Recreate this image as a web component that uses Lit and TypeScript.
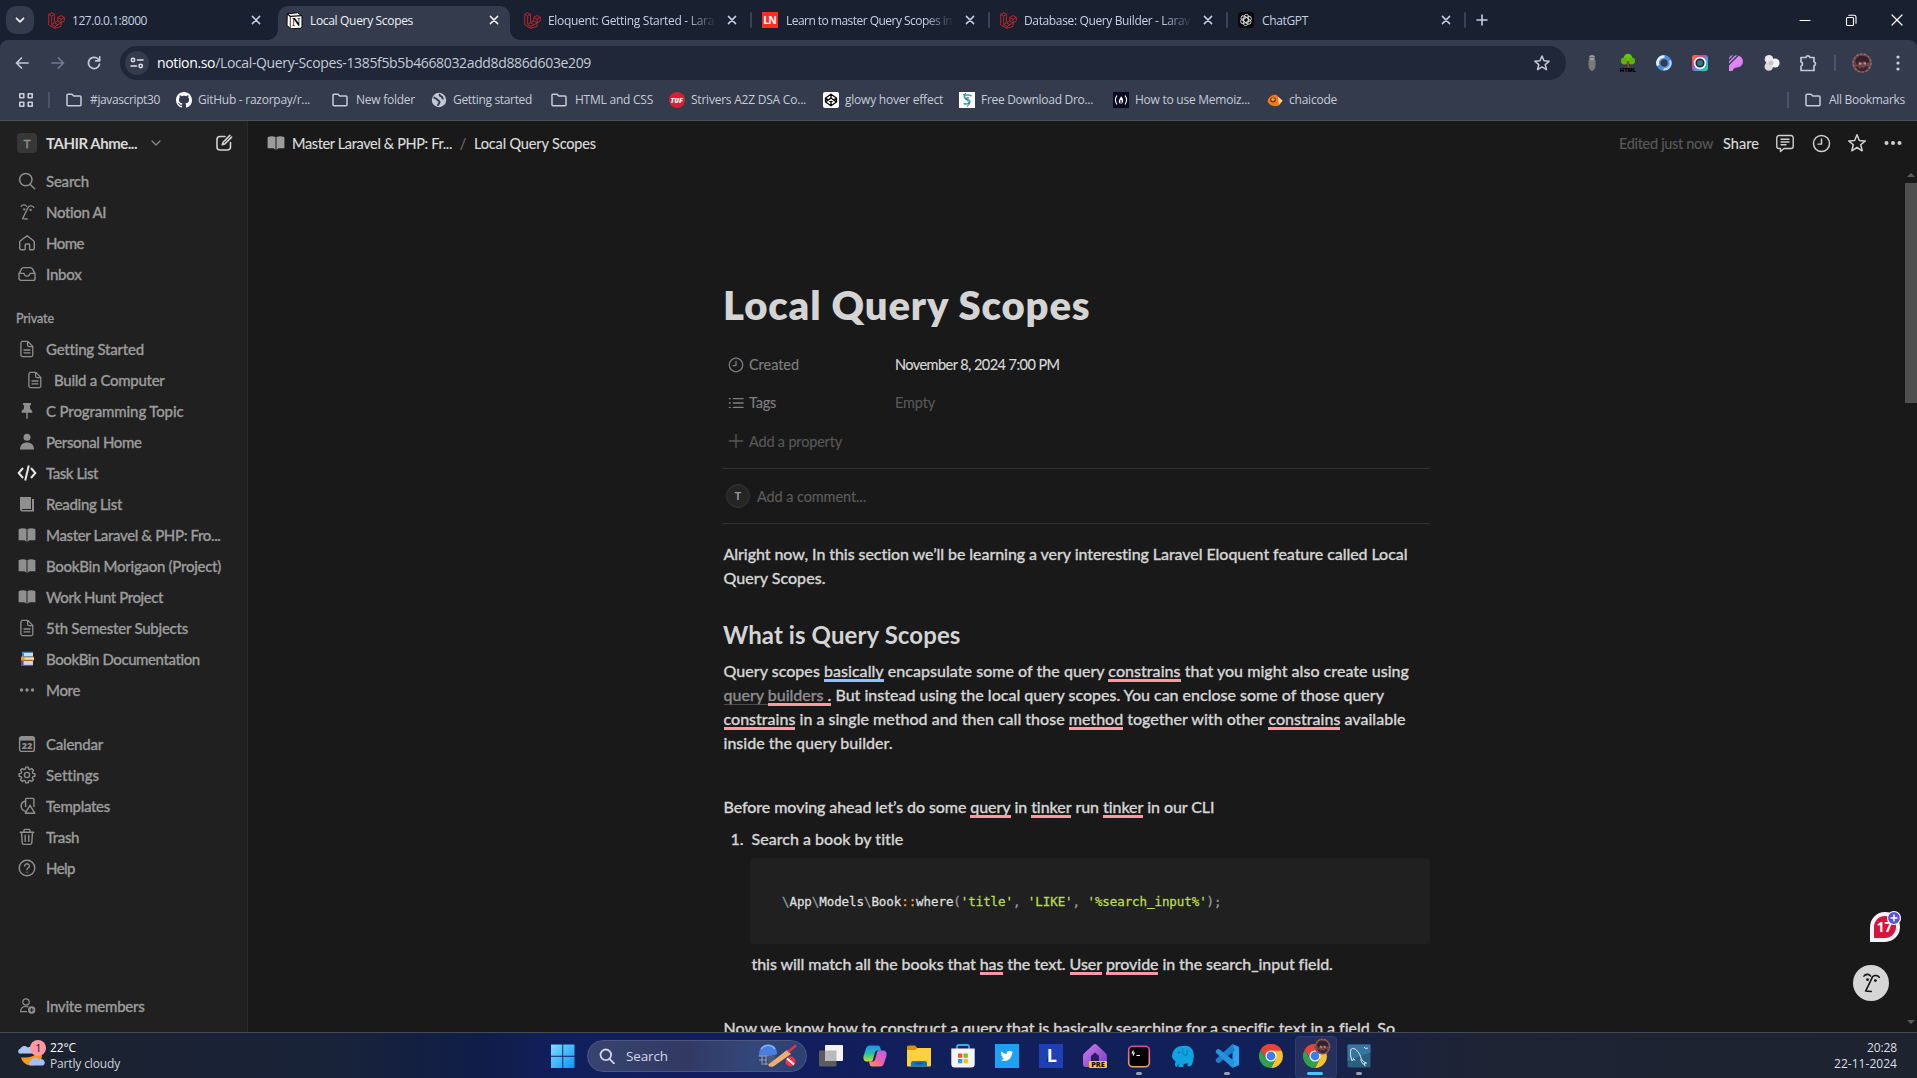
import { LitElement, html, css, svg, nothing } from "lit";
import { customElement, property } from "lit/decorators.js";

/** One line of text, tracked so that it fills the given measure. */
@customElement("fit-text")
class FitText extends LitElement {
  static styles = css`
    :host { display: inline-block; white-space: nowrap; flex: none; }
  `;
  @property({ type: Number }) measure = 0;
  firstUpdated() {
    const n = (this.textContent ?? "").length;
    const natural = this.getBoundingClientRect().width;
    if (n && this.measure && natural) {
      this.style.letterSpacing = `${(this.measure - natural) / n}px`;
    }
  }
  render() {
    return html`<slot></slot>`;
  }
}

const fit = (w: number, content: unknown, cls = "") =>
  html`<fit-text class=${cls} .measure=${w}>${content}</fit-text>`;

const icon = (size: number, box: number, body: unknown, cls = "") =>
  html`<svg class="ic ${cls}" width=${size} height=${size} viewBox="0 0 ${box} ${box}">${body}</svg>`;

const line = (size: number, box: number, d: string, sw: number, extra: unknown = nothing) =>
  icon(size, box, svg`<g fill="none" stroke="currentColor" stroke-width=${sw} stroke-linecap="round" stroke-linejoin="round"><path d=${d}></path>${extra}</g>`);

/* ---------- browser icons ---------- */
const laravel = icon(17, 24, svg`<g fill="none" stroke="#c6252b" stroke-width="1.3" stroke-linejoin="round">
  <path d="M1 3.2 5 1l4.2 2.2v12l4.6-2.5V7.6l4.6-2.6 4.6 2.6v5.2l-4.6 2.6v5L9.8 23 1 18.2z"></path>
  <path d="M1 3.2 5.2 5.6 9.2 3.2M5.2 5.6v12.2l4.6 2.6 8.6-5M9.8 20.4V23M9.2 15.2l4.6 2.7M5.2 17.8l4-2.6M13.8 7.6l4.6 2.6 4.6-2.6M18.4 10.2v5.2M13.8 12.7l4.6 2.7"></path></g>`);
const notion = icon(17, 17, svg`<path d="M1.2 1.8 11.6.8l4.4 3V15l-1 1.2-10.6.6L1 13.2z" fill="#fff" stroke="#050505" stroke-width="1"></path>
  <path d="M1.4 2 4.4 4.4l11.3-.7" fill="none" stroke="#050505" stroke-width="1.2"></path><path d="M4.3 4.4v12" stroke="#050505" stroke-width=".8"></path>
  <text x="10.2" y="14.2" text-anchor="middle" font-family="Liberation Serif,serif" font-weight="700" font-size="11.5" fill="#000">N</text>`);
const ln = icon(16, 16, svg`<rect width="16" height="16" fill="#ff2d20"></rect><text x="7.600" y="12" text-anchor="middle" font-family="Open Sans,sans-serif" font-weight="700" font-size="10.5" letter-spacing="-1" fill="#fff">LN</text>`);
const gpt = icon(16, 16, svg`<rect width="16" height="16" rx="3" fill="#0b0b0b"></rect><g fill="none" stroke="#d8d8d8" stroke-width=".9">
  ${[0, 60, 120, 180, 240, 300].map((a) => svg`<path transform="rotate(${a} 8 8)" d="M8 5.2 10.6 6.7V4.6a2.3 2.3 0 0 0-4.5-.6v3.8"></path>`)}</g>`);
const closeX = line(10, 10, "M1.4 1.4l7.2 7.2M8.6 1.4l-7.2 7.2", 1.5);
const folder = line(16, 16, "M1 3.2a1 1 0 0 1 1-1h4l1.8 1.9H14a1 1 0 0 1 1 1v7.7a1 1 0 0 1-1 1H2a1 1 0 0 1-1-1z", 1.5);
const github = icon(16, 16, svg`<path fill="#fff" d="M8 0C3.58 0 0 3.58 0 8c0 3.54 2.29 6.53 5.47 7.59.4.07.55-.17.55-.38 0-.19-.01-.82-.01-1.49-2.01.37-2.53-.49-2.69-.94-.09-.23-.48-.94-.82-1.13-.28-.15-.68-.52-.01-.53.63-.01 1.08.58 1.23.82.72 1.21 1.87.87 2.33.66.07-.52.28-.87.51-1.07-1.78-.2-3.64-.89-3.64-3.95 0-.87.31-1.59.82-2.15-.08-.2-.36-1.02.08-2.12 0 0 .67-.21 2.2.82.64-.18 1.32-.27 2-.27s1.36.09 2 .27c1.53-1.04 2.2-.82 2.2-.82.44 1.1.16 1.92.08 2.12.51.56.82 1.27.82 2.15 0 3.07-1.87 3.75-3.65 3.95.29.25.54.73.54 1.48 0 1.07-.01 1.93-.01 2.2 0 .21.15.46.55.38A8.01 8.01 0 0016 8c0-4.42-3.58-8-8-8z"></path>`);
const globe = icon(16, 16, svg`<circle cx="8" cy="8" r="7.2" fill="#c3c8d2"></circle><path d="M2.500 5.500c2 .4 2.500.5 3.500 2s3 .8 2.500 2.800-1.500 1.500-1.500 3.500M9 2C8 3.500 9.500 4 10.500 4.500s.5 2 2 2.400" fill="none" stroke="#333b4c" stroke-width="2"></path>`);
const tuf = icon(16, 16, svg`<circle cx="8" cy="8" r="8" fill="#d51f33"></circle><text x="7.700" y="10.500" text-anchor="middle" font-family="Open Sans,sans-serif" font-style="italic" font-weight="800" font-size="6.800" fill="#fff">TUF</text>`);
const codepen = icon(16, 16, svg`<rect width="16" height="16" rx="2" fill="#fff"></rect><path d="M8 2.300 13.500 6v4L8 13.700 2.500 10V6zM8 2.300V6M8 10v3.700M2.500 6 8 10l5.500-4M2.500 10 8 6l5.500 4" fill="none" stroke="#000" stroke-width="1.300"></path>`);
const freeDl = icon(16, 16, svg`<rect width="16" height="16" fill="#fff"></rect><path d="M12.500 4C9 2 4 3 5.500 5.500s5.500 1.500 5.500 4-4 3-6.500 2" fill="none" stroke="#2aa6b8" stroke-width="1.500"></path><path d="M10 6C7 5 6 7 8 8.500S12 12 8 14.500M4 3l3-1.500" fill="none" stroke="#35506b" stroke-width="1"></path>`);
const fcc = icon(16, 16, svg`<rect width="16" height="16" fill="#0a0a23"></rect><path d="M4 3.500Q.8 8 4 12.500M12 3.500Q15.200 8 12 12.500" fill="none" stroke="#fff" stroke-width="1.100"></path><path d="M8 4.200C9.500 6 10.500 7.500 10 9.500S8.600 12 8 12s-2-.5-2.200-2.500S7.500 6.500 8 4.200z" fill="#fff"></path><path d="M8 8v4" stroke="#0a0a23" stroke-width="1.200"></path>`);
const chai = icon(16, 16, svg`<path d="M.5 9c1-4 5-7 9-6l6 5.500L12 13.500c-5 2-10 0-11.500-4.500z" fill="#f07a1c"></path><ellipse cx="6" cy="8" rx="3" ry="2.400" fill="#8a2a08"></ellipse><ellipse cx="6" cy="7.500" rx="1.700" ry="1.200" fill="#ffb347"></ellipse><path d="M11 4.800l4.500 3.900-3.500 4z" fill="#ffd9a0"></path>`);

/* ---------- sidebar icons ---------- */
const doc = line(18, 18, "M4 1.400h5.800l5 5v8.700a1.500 1.500 0 0 1-1.500 1.500H4.400a1.500 1.500 0 0 1-1.500-1.500V2.900A1.500 1.500 0 0 1 4.400 1.400M9.600 1.600v3.500a1.500 1.500 0 0 0 1.500 1.500h3.500M6 10h6M6 12.800h6", 1.300);
const book = icon(18, 18, svg`<path fill="currentColor" d="M.6 3.300C3 1.900 6.500 2 8.500 3v13c-1-1.200-1.600-1.700-3-1.700H.6zM17.400 3.300C15 1.900 11.500 2 9.500 3v13c1-1.200 1.600-1.700 3-1.700h4.900z"></path>`);
const facePaths = svg`<path d="M3.200 3.400c1.200-1.800 4-2 5.400-.2M9.600 5.400c.4-2.800 4.600-3.600 6.200-1M9.600 5.400 4.600 15.600l4.600.4" fill="none" stroke="currentColor" stroke-width="1.300" stroke-linecap="round" stroke-linejoin="round"></path><circle cx="6.200" cy="6.300" r="1.150" fill="currentColor"></circle><circle cx="12.600" cy="7" r="1.150" fill="currentColor"></circle>`;
const gearPath = (() => {
  let d = "";
  for (let i = 0; i < 8; i++) {
    const at = (r: number, o: number) => {
      const a = ((i * 45 + o) * Math.PI) / 180;
      return `${(9 + r * Math.cos(a)).toFixed(2)} ${(9 + r * Math.sin(a)).toFixed(2)}`;
    };
    d += `${i ? "L" : "M"}${at(6.2, -15)}L${at(8, -9)}L${at(8, 9)}L${at(6.2, 15)}`;
  }
  return d + "z";
})();
const clockD = "M9 4.800V9.600H5.800";
const I: Record<string, unknown> = {
  search: line(18, 18, "M12 12.200 16.600 16.800", 1.500, svg`<circle cx="7.800" cy="7.600" r="6.200"></circle>`),
  ai: icon(18, 18, facePaths),
  home: line(18, 18, "M2.500 6.800 9 1.700l6.500 5.100c.5.400.8.900.8 1.500v6a1.500 1.500 0 0 1-1.500 1.500h-2.600a.6.600 0 0 1-.6-.6V11a1 1 0 0 0-1-1H8.200a1 1 0 0 0-1 1v4.200a.6.600 0 0 1-.6.600H3.200a1.500 1.500 0 0 1-1.500-1.500v-6c0-.6.300-1.100.8-1.500z", 1.400),
  inbox: line(18, 18, "M1 8.600 3.700 3.700A2 2 0 0 1 5.400 2.600h7.200a2 2 0 0 1 1.700 1.100L17 8.600v4.800a2 2 0 0 1-2 2H3a2 2 0 0 1-2-2zM1 8.400h4.400c.4 0 .7.300.8.700a2.900 2.900 0 0 0 5.600 0c.1-.4.400-.7.800-.7H17", 1.400),
  doc,
  pin: icon(18, 18, svg`<path fill="currentColor" d="M5 1h8v1.800l-1.200.9.500 3.600c1.400.7 2.200 1.800 2.200 3.400H9.700V16l-.7 1.600-.7-1.600v-5.300H3.500c0-1.600.8-2.700 2.200-3.400l.5-3.600L5 2.800z"></path>`),
  person: icon(18, 18, svg`<circle cx="9" cy="4.300" r="3.500" fill="currentColor"></circle><path d="M2 16.500c0-4.500 2.800-7 7-7s7 2.500 7 7z" fill="currentColor"></path>`),
  code: icon(20, 20, svg`<g fill="none" stroke="#e6e6e6" stroke-width="2"><path d="M6 5 1.700 10 6 15M14 5l4.300 5-4.300 5M11.800 2.400 8.200 17.600"></path></g>`),
  reading: icon(18, 18, svg`<path fill="currentColor" d="M2 2h11v12H4.200c-.6 0-.6 1 0 1H14V4h2v12.500H4.500A2.500 2.500 0 0 1 2 14z"></path>`),
  book,
  books: icon(18, 18, svg`<rect x="4" y="2.500" width="11" height="4" fill="#c9ddea"></rect><rect x="4" y="2.500" width="2" height="4" fill="#2f8fd6"></rect><path d="M4 2.300h11M4 6.500h11" stroke="#3b94d9" stroke-width="1"></path><rect x="3" y="7" width="13" height="3.200" fill="#ffe0a3"></rect><path d="M3 7.200h13M3 10h13" stroke="#f2961d" stroke-width="1"></path><rect x="3" y="7" width="3.500" height="3.200" fill="#f2961d"></rect><rect x="3" y="11" width="12" height="4" fill="#cfd6e6"></rect><rect x="3" y="11" width="2.500" height="4.500" fill="#6b3fa0"></rect><path d="M3 15.400h12" stroke="#6b5a9a" stroke-width="1"></path>`),
  more: icon(18, 18, svg`<g fill="currentColor"><circle cx="3.500" cy="9" r="1.700"></circle><circle cx="9" cy="9" r="1.700"></circle><circle cx="14.500" cy="9" r="1.700"></circle></g>`),
  calendar: icon(18, 18, svg`<rect x="1.600" y="1.600" width="14.800" height="14.800" rx="2.200" fill="none" stroke="currentColor" stroke-width="1.400"></rect><path d="M1.600 2h14.800v3.600H1.600z" fill="currentColor"></path><text x="9" y="14.100" text-anchor="middle" font-family="Open Sans,sans-serif" font-weight="800" font-size="9" fill="currentColor">22</text>`),
  settings: line(18, 18, gearPath, 1.400, svg`<circle cx="9" cy="9" r="2.600"></circle>`),
  templates: line(18, 18, "M7 4.300a5 5 0 0 0 .3 9.800M7.600 9.600V2.200a.8.800 0 0 1 .8-.8h6.700a.8.800 0 0 1 .8.800v7.300M12 8.300 16.800 16.200H7.400z", 1.400),
  trash: line(18, 18, "M2.200 4.200h13.600M6 4V2.600c0-.7.500-1.200 1.200-1.200h3.600c.7 0 1.200.5 1.200 1.200V4M3.500 4.400l.7 10.400a1.700 1.700 0 0 0 1.700 1.600h6.200a1.700 1.700 0 0 0 1.700-1.600l.7-10.400M7.200 7.200v6.200M10.800 7.200v6.200", 1.400),
  help: line(18, 18, "M6.700 7a2.300 2.300 0 1 1 3.500 2c-.8.500-1.200.9-1.200 1.700M9 13.100v.1", 1.400, svg`<circle cx="9" cy="9" r="7.800"></circle>`),
  invite: icon(18, 18, svg`<g fill="none" stroke="currentColor" stroke-width="1.200"><circle cx="8" cy="5" r="3.200"></circle><path d="M9 14.700H2.600c0-3.500 2-5.200 5.400-5.200 1 0 1.800.2 2.500.5"></path></g><circle cx="13.700" cy="13" r="3.700" fill="currentColor"></circle><path d="M13.700 11v4M11.700 13h4" stroke="#202020" stroke-width="1.100"></path>`),
};

type Row = [string, string, number, boolean?];
const MAIN: Row[] = [["search", "Search", 43], ["ai", "Notion AI", 60.5], ["home", "Home", 38], ["inbox", "Inbox", 35.5]];
const PAGES: Row[] = [
  ["doc", "Getting Started", 97.5], ["doc", "Build a Computer", 110.5, true], ["pin", "C Programming Topic", 137.5],
  ["person", "Personal Home", 95.5], ["code", "Task List", 52], ["reading", "Reading List", 76],
  ["book", "Master Laravel & PHP: Fro...", 174.5], ["book", "BookBin Morigaon (Project)", 175], ["book", "Work Hunt Project", 117],
  ["doc", "5th Semester Subjects", 142], ["books", "BookBin Documentation", 154], ["more", "More", 34],
];
const TOOLS: Row[] = [["calendar", "Calendar", 57], ["settings", "Settings", 52.5], ["templates", "Templates", 64], ["trash", "Trash", 33], ["help", "Help", 29]];

const TABS: [unknown, string, number, boolean][] = [
  [laravel, "127.0.0.1:8000", 75, false], [notion, "Local Query Scopes", 103, true],
  [laravel, "Eloquent: Getting Started - Lara", 166, false], [ln, "Learn to master Query Scopes in", 166, false],
  [laravel, "Database: Query Builder - Larav", 166, false], [gpt, "ChatGPT", 46, false],
];
/* icon, label, text width, gap before the label, width of the label's cell */
const MARKS: [unknown, string, number, number, number][] = [
  [folder, "#javascript30", 70, 8, 70], [github, "GitHub - razorpay/r...", 112, 6, 118], [folder, "New folder", 59, 8, 59],
  [globe, "Getting started", 79, 6, 82], [folder, "HTML and CSS", 78, 8, 78], [tuf, "Strivers A2Z DSA Co...", 115, 6, 116],
  [codepen, "glowy hover effect", 98, 6, 98], [freeDl, "Free Download Dro...", 112, 6, 116], [fcc, "How to use Memoiz...", 115, 6, 116], [chai, "chaicode", 48, 6, 48],
];

const EXT = [
  icon(20, 20, svg`<path d="M7 4.500a3 2.500 0 0 1 6 0z" fill="#9a9a9a"></path><path d="M6.500 7h7V12c0 3-1.500 5.500-3.500 6-2-.5-3.500-3-3.500-6z" fill="#7b7b7b"></path><path d="M7.500 6h5" stroke="#d9d9d9" stroke-width="1.300"></path>`),
  icon(20, 20, svg`<circle cx="10" cy="5" r="4.300" fill="#68c40c"></circle><circle cx="6.300" cy="8" r="3.400" fill="#5ab50a"></circle><circle cx="13.700" cy="8" r="3.400" fill="#5ab50a"></circle><path d="M10 8v6.500" stroke="#8a4b12" stroke-width="2.200"></path><text x="10" y="18.600" text-anchor="middle" font-family="Open Sans,sans-serif" font-weight="800" font-size="5.600" fill="#000">HTML</text>`),
  icon(20, 20, svg`<circle cx="10" cy="10" r="5.800" fill="none" stroke="#4d8fdd" stroke-width="4.200"></circle><path d="M4 12.500a6.300 6.300 0 0 1 6.500-8.800" fill="none" stroke="#e2f0ff" stroke-width="2.600"></path><path d="M16 7.500a6.300 6.300 0 0 1-6.500 8.800" fill="none" stroke="#b8d6f7" stroke-width="2"></path>`),
  icon(20, 20, svg`<defs><linearGradient id="rb" x1="0" y1="0" x2="1" y2="1"><stop offset="0" stop-color="#ff8a1e"></stop><stop offset=".3" stop-color="#ff2e8a"></stop><stop offset=".65" stop-color="#2ea8ff"></stop><stop offset="1" stop-color="#2ee06a"></stop></linearGradient></defs><rect x="2" y="2" width="16" height="16" rx="3" fill="url(#rb)"></rect><circle cx="10" cy="10" r="6.200" fill="#fff"></circle><circle cx="10" cy="10" r="3.800" fill="#3d6f86" stroke="#1c2733" stroke-width="1.600"></circle>`),
  icon(20, 20, svg`<defs><linearGradient id="pp" x1="0" y1="0" x2="1" y2="1"><stop offset="0" stop-color="#b78bff"></stop><stop offset=".5" stop-color="#e884f0"></stop><stop offset="1" stop-color="#b57bff"></stop></linearGradient></defs><path d="M3 2.500H11a6 6 0 0 1 0 12c-2.500 0-3.800 1.500-4.500 3.500H3z" fill="url(#pp)"></path><path d="M2 8.500 8.500 2M2 12.500 12 2.500M2 4.800 5 1.800" stroke="#333b4c" stroke-width="1.200"></path>`),
  icon(20, 20, svg`<circle cx="7" cy="6.300" r="4.300" fill="#e9e9e9"></circle><circle cx="6.800" cy="13.500" r="4.300" fill="#dcdcdc"></circle><circle cx="13" cy="10" r="4.600" fill="#f2f2f2"></circle><circle cx="9" cy="10" r="2.500" fill="#c6c6c6"></circle>`),
  line(20, 20, "M3 4.500h4.800a2.200 2.200 0 0 1 4.200 0h4v4.300a2.100 2.100 0 0 1 0 4V17.500H3v-4.300a2.300 2.300 0 0 0 0-4.300z", 1.700),
];

const avatarArt = svg`<circle cx="10" cy="10" r="10" fill="#6e454a"></circle><path d="M3 8C5 3 8 2 11 3c4 0 6 2 6.500 6l-3 1.500L12 8l-2 1.500L7.500 8 5 12z" fill="#35202a"></path><path d="M4 14c2 3 4 4.500 6.500 4.500S15 17 16.500 14l-3-1-1.500 2.500-2.500-1L7 16l-1-3z" fill="#3b252c"></path><path d="M7 9.500l2.500.5-.5 2-2-.5zM11.500 10l2.500-1v2.500h-2z" fill="#bf8f8c"></path><circle cx="10" cy="10" r="9" fill="none" stroke="#96706f" stroke-width="1.200" stroke-dasharray="2.500 1.500"></circle>`;
const chromeArt = svg`<path d="M12 12 1.600 6A12 12 0 0 1 22.400 6z" fill="#ea4335"></path><path d="M12 6.500H22.600A12 12 0 0 1 12 24l4.800-9.200z" fill="#fbc02d"></path><path d="M1.600 6 7.200 14.800 16.800 14.800 12 24A12 12 0 0 1 1.600 6z" fill="#2fa04c"></path><path d="M1.600 6A12 12 0 0 1 22.600 6.600H12A5.500 5.500 0 0 0 7 14.300z" fill="#ea4335"></path><circle cx="12" cy="12" r="5.600" fill="#fff"></circle><circle cx="12" cy="12" r="4.400" fill="#3b7ded"></circle>`;

const APPS: { art: unknown; mark?: string; active?: boolean }[] = [
  { art: icon(24, 24, svg`<rect x="0" y="6.500" width="17.500" height="16" rx="1" fill="#5c5c60"></rect><rect x="6" y="1" width="18" height="16" rx="1" fill="#f4f4f6"></rect><rect x="6" y="6.500" width="11.500" height="10.500" fill="#b9babd"></rect>`) },
  { art: icon(24, 24, svg`<defs><linearGradient id="c1" x1="0" y1="0" x2="0" y2="1"><stop offset="0" stop-color="#2590f4"></stop><stop offset=".5" stop-color="#22c0a5"></stop><stop offset="1" stop-color="#c8dc2a"></stop></linearGradient><linearGradient id="c2" x1="1" y1="0" x2="0" y2="1"><stop offset="0" stop-color="#a267f5"></stop><stop offset=".5" stop-color="#ee5db0"></stop><stop offset="1" stop-color="#ff9a4c"></stop></linearGradient></defs><path d="M7 1.500h7.500c2 0 2.500 1 3 3l.6 2h-3.600c-1.500 0-2.300 1-2.700 2.500l-1.600 6C9.600 17 9 17.500 7.500 17.500H3.700C1 17.500-.2 15 .6 12L3 4.500C3.700 2.500 4.800 1.500 7 1.500z" fill="url(#c1)"></path><path d="M17 22.500H9.500c-2 0-2.500-1-3-3l-.6-2h3.600c1.500 0 2.300-1 2.700-2.500l1.600-6c.6-2 1.200-2.500 2.700-2.500h3.800c2.700 0 3.900 2.500 3.100 5.500L21 19.500c-.7 2-1.800 3-4 3z" fill="url(#c2)"></path>`) },
  { art: icon(24, 24, svg`<path d="M0 3a1.500 1.500 0 0 1 1.500-1.500h6.500L10.500 4H23a1 1 0 0 1 1 1v4H0z" fill="#d99208"></path><path d="M0 6h8l2.500-2H24v17.500a1 1 0 0 1-1 1H1a1 1 0 0 1-1-1z" fill="#fdd03f"></path><path d="M4 22.500V19a2 2 0 0 1 2-2h12a2 2 0 0 1 2 2v3.500z" fill="#1474c8"></path><path d="M8 19.500h8" stroke="#0b4f91" stroke-width="1.400"></path>`) },
  { art: icon(24, 24, svg`<path d="M6 5V2.500A1.500 1.500 0 0 1 7.500 1h9A1.500 1.500 0 0 1 18 2.500V5" fill="none" stroke="#29b0f2" stroke-width="1.800"></path><path d="M.3 4.500h23.400v15.500a3.500 3.500 0 0 1-3.500 3.500H3.800A3.500 3.500 0 0 1 .3 20z" fill="#f5f5f7"></path><path d="M7 9.500h4.300v4.300H7z" fill="#f05a28"></path><path d="M12.500 9.500h4.300v4.300h-4.300z" fill="#7fba28"></path><path d="M7 15h4.300v4.300H7z" fill="#1f9fe8"></path><path d="M12.500 15h4.300v4.300h-4.300z" fill="#fbb913"></path>`) },
  { art: icon(24, 24, svg`<rect width="24" height="24" fill="#1da1f2"></rect><path transform="translate(5.500 5.500) scale(.53)" fill="#fff" d="M23.953 4.570a10 10 0 01-2.825.775 4.958 4.958 0 002.163-2.723c-.951.555-2.005.959-3.127 1.184a4.920 4.920 0 00-8.384 4.482C7.690 8.095 4.067 6.130 1.640 3.162a4.822 4.822 0 00-.666 2.475c0 1.710.870 3.213 2.188 4.096a4.904 4.904 0 01-2.228-.616v.060a4.923 4.923 0 003.946 4.827 4.996 4.996 0 01-2.212.085 4.936 4.936 0 004.604 3.417 9.867 9.867 0 01-6.102 2.105c-.390 0-.779-.023-1.170-.067a13.995 13.995 0 007.557 2.209c9.053 0 13.998-7.496 13.998-13.985 0-.210 0-.420-.015-.630A9.935 9.935 0 0024 4.590z"></path>`) },
  { art: icon(24, 24, svg`<rect width="24" height="24" fill="#1f3fb5"></rect><path d="M7 18 10 8v10z" fill="#0d2f4f"></path><text x="12.800" y="17.600" text-anchor="middle" font-family="Open Sans,sans-serif" font-weight="700" font-size="18" fill="#fff">L</text>`) },
  { art: icon(24, 24, svg`<defs><linearGradient id="h1" x1="0" y1="0" x2="1" y2="1"><stop offset="0" stop-color="#d27bf0"></stop><stop offset="1" stop-color="#6f3fb5"></stop></linearGradient></defs><path d="M10 1a3 3 0 0 1 4 0l8.500 8A4 4 0 0 1 24 12v8a3 3 0 0 1-3 3H3a3 3 0 0 1-3-3v-8a4 4 0 0 1 1.500-3z" fill="url(#h1)"></path><path d="M12 8.500l4 3.500v6H8v-6z" fill="#2b1c66"></path><rect x="6" y="17" width="18" height="7" rx="1" fill="#ffc61a"></rect><text x="15" y="23" text-anchor="middle" font-family="Open Sans,sans-serif" font-weight="800" font-size="7.200" fill="#111">PRE</text>`) },
  { art: icon(24, 24, svg`<defs><linearGradient id="tm" x1="0" y1="0" x2="0" y2="1"><stop offset="0" stop-color="#e83ea8"></stop><stop offset="1" stop-color="#f0a35a"></stop></linearGradient></defs><rect x="1.700" y="2.200" width="20.600" height="20.600" rx="4" fill="#000" stroke="url(#tm)" stroke-width="1.600"></rect><path d="M6.500 6.500 5.200 9h2L6 11.500M9.500 11.500h3.500" fill="none" stroke="#fff" stroke-width="1.100"></path>`), mark: "dot" },
  { art: icon(24, 24, svg`<path d="M1 13C1 6 6 1.500 12 2c3-1 8 0 9.500 4 2 4 1.500 9-.5 14.500-1 2-3 2-4.500 1.500v-3c-1 .8-2.500 1-4 .8V23H7.500v-3.500c-1 1-1 3-2.500 3.500-1.500-1-1-4-.5-6C3 16.500 1.800 15 1 13z" fill="#0fa4df"></path><path d="M12 4c-2 3 0 7 3 8 1.500-1.500 1.500-4 1-6" fill="none" stroke="#0a7fb5" stroke-width="1.100"></path><circle cx="8" cy="8.500" r=".9" fill="#08587f"></circle>`) },
  { art: icon(24, 24, svg`<path d="M17.500 0 24 3v18l-6.500 3z" fill="#2aa4f0"></path><path d="M17.500 0 .8 15.200l0 2.200 2 1.600 1.200 0L20 6.500z" fill="#1b80cf"></path><path d="M17.500 24 .8 8.800l0-2.200 2-1.600 1.200 0L20 17.500z" fill="#2391dc"></path>`), mark: "dot" },
  { art: icon(24, 24, chromeArt) },
  { art: icon(24, 24, svg`${chromeArt}<g transform="translate(11.500 -5.500) scale(.8)">${avatarArt}</g>`, "over"), mark: "wide", active: true },
  { art: icon(24, 24, svg`<rect x=".5" y=".5" width="23" height="23" rx="1.500" fill="#2b5f82"></rect><path d="M.5.500h23v8L.5 17z" fill="#3c7fa8" opacity=".7"></path><path d="M5 17C3.500 12 2 5 5.500 4.500S13 9.500 14 14c1 3 3 4 5.500 5l-2.500.3 1.200 2.400c-2.500-1.500-3.700-4-4.700-6.200M8 16.500l-1.500-2-1 2.500M17 3l1.500 1.500 2.500-.5" fill="none" stroke="#dfeaf2" stroke-width="1"></path>`), mark: "dot" },
];

@customElement("app-root")
class AppRoot extends LitElement {
  static styles = css`
    :host { display: block; }
    * { box-sizing: border-box; }
    .screen { position: relative; width: 1917px; height: 1078px; overflow: hidden; display: flex; flex-direction: column; background: #191919; font-family: "Open Sans", "Noto Sans", sans-serif; }
    .ic { display: block; flex: none; }
    .over { overflow: visible; }
    .center { display: flex; align-items: center; justify-content: center; flex: none; }

    /* tab strip */
    .tabs { height: 40px; flex: none; background: #192130; display: flex; align-items: flex-start; padding-left: 6px; color: #c6d0e2; }
    .tabsearch { width: 28px; height: 28px; margin: 6px 6px 0 0; border-radius: 10px; background: #333b4c; color: #e4e8f0; }
    .tab { width: 232px; height: 34px; margin: 6px 0 0; padding: 0 11px 6px 8px; display: flex; align-items: center; font-size: 12px; flex: none; }
    .tab.on { background: #333b4c; border-radius: 10px 10px 0 0; color: #eef1f6; position: relative; }
    .tab.on::before, .tab.on::after { content: ""; position: absolute; bottom: 0; width: 10px; height: 10px; }
    .tab.on::before { left: -10px; background: radial-gradient(circle at 0 0, transparent 9.500px, #333b4c 10px); }
    .tab.on::after { right: -10px; background: radial-gradient(circle at 100% 0, transparent 9.500px, #333b4c 10px); }
    .tabicon { width: 17px; margin-right: 7px; }
    .tablabel { width: 168px; display: flex; }
    .tablabel.fade { -webkit-mask-image: linear-gradient(90deg, #000 138px, rgba(0, 0, 0, 0.1) 166px); mask-image: linear-gradient(90deg, #000 138px, rgba(0, 0, 0, 0.1) 166px); }
    .tabclose { margin-left: 11px; }
    .tabsep { width: 6px; height: 40px; flex: none; }
    .tabsep i { width: 2px; height: 16px; background: #3a4355; border-radius: 1px; }
    .newtab { height: 40px; width: 28px; }
    .winbtns { margin-left: auto; display: flex; height: 40px; color: #fff; }
    .winbtns div { width: 40px; }
    .winbtns div:nth-child(2) { width: 52px; }

    /* toolbar */
    .toolbar { height: 46px; flex: none; background: #333b4c; display: flex; align-items: center; color: #c2cad8; padding-left: 4px; border-radius: 8px 8px 0 0; }
    .strip { background: #192130; flex: none; }
    .nav { width: 36px; }
    .dim { color: #717a8c; }
    .omni { height: 34px; width: 1446px; margin-left: 8px; border-radius: 17px; background: #1f2738; display: flex; align-items: center; padding: 0 15px 0 5px; font-size: 14px; color: #c5cbd6; }
    .site { width: 24px; height: 24px; border-radius: 50%; background: #333b4c; margin-right: 8px; color: #dfe3ea; }
    .host { color: #fff; }
    .url { margin-top: -1px; }
    .omni .star { margin-left: auto; }
    .exts { display: flex; margin-left: 8px; }
    .vsep { width: 2px; height: 16px; background: #4a5569; flex: none; }
    .extsep { margin-left: 8px; }
    .ava { width: 52px; }
    .kebab { width: 20px; }

    /* bookmarks */
    .marks { height: 35px; flex: none; background: #333b4c; border-bottom: 1px solid #4b5059; display: flex; align-items: center; padding: 0 12px 7px 18px; font-size: 12px; color: #c6ccd8; }
    .marks .vsep { margin: 0 16px 0 14px; }
    .mark { display: flex; align-items: center; margin-right: 16px; flex: none; }
    .marklabel { flex: none; display: flex; box-sizing: content-box; }
    .marks .right { margin-left: auto; display: flex; align-items: center; }
    .marks .right .marklabel { padding-left: 8px; }

    /* workspace */
    .work { height: 911px; flex: none; display: flex; font-family: Lato, "Open Sans", sans-serif; }
    .side { width: 248px; background: #202020; border-right: 1px solid #2b2b2b; color: #9b9b9b; font-size: 15px; font-weight: 500; flex: none; display: flex; flex-direction: column; -webkit-text-stroke: 0.3px currentColor; }
    .side > * { flex: none; }
    .owner { height: 44px; display: flex; align-items: center; padding-left: 17px; color: #d8d8d8; }
    .ownerbox { width: 20px; height: 20px; border-radius: 4px; background: #373737; color: #8f8f8f; font-size: 12px; margin-right: 9px; }
    .ownername { font-weight: 700; -webkit-text-stroke: 0; }
    .owner .chev { margin-left: 14px; color: #8a8a8a; }
    .owner .pen { margin-left: auto; margin-right: 14px; color: #d4d4d4; }
    .row { height: 31px; display: flex; align-items: center; padding-left: 17px; }
    .row.sub { padding-left: 25px; }
    .rowicon { width: 20px; margin-right: 9px; color: #8f8f8f; }
    .caption { height: 44px; padding: 14px 0 0 16px; display: flex; align-items: center; font-size: 12.500px; }
    .gap23 { height: 23px; }
    .gap107 { height: 107px; }

    .main { flex: 1; display: flex; flex-direction: column; position: relative; overflow: hidden; }
    .topbar { height: 45px; flex: none; display: flex; align-items: center; padding: 0 15px 1px 19px; font-size: 14.500px; color: #dcdcdc; -webkit-text-stroke: 0.15px currentColor; }
    .topbar .ic { color: #9b9b9b; }
    .crumb { margin-left: 7px; }
    .slash { width: 22px; color: #6d6d6d; }
    .edited { margin-left: auto; color: #5a5a5a; margin-right: 10px; }
    .share { margin-right: 8px; }
    .act { width: 36px; }
    .act .ic { color: #d0d0d0; }
    .act:last-child { margin-right: -9px; }

    .scroll { position: absolute; right: 0; top: 45px; width: 12px; height: 866px; display: flex; flex-direction: column; align-items: center; color: #5a5a5a; }
    .thumb { width: 12px; height: 220px; background: #4f4f4f; margin-top: 4px; flex: none; }
    .scroll .down { margin-top: auto; margin-bottom: 6px; }
    .scroll .up { margin-top: 5px; }

    .page { width: 708px; margin-left: 474px; padding-top: 108px; color: #d4d4d4; flex: none; }
    .title { height: 62px; padding-left: 1px; display: flex; align-items: center; font-size: 40px; font-weight: 800; line-height: 1; }
    .prop { height: 38.250px; display: flex; align-items: center; font-size: 14.500px; color: #7f7f7f; padding-left: 6px; }
    .props { padding: 9.500px 0 7.750px; -webkit-text-stroke: 0.15px currentColor; }
    .propname { width: 146px; margin-left: 5px; }
    .prop .pale, .prop.pale { color: #585858; }
    .value { color: #d8d8d8; }
    .rule { height: 1px; background: #303030; }
    .commentrow { height: 54px; display: flex; align-items: center; padding-left: 4px; font-size: 14.500px; color: #5c5c5c; -webkit-text-stroke: 0.15px currentColor; }
    .mini { width: 24px; height: 24px; border: 1px solid #343434; border-radius: 50%; background: #252525; color: #999; font-size: 10.500px; margin-right: 7px; font-weight: 700; }
    .ln { height: 24px; line-height: 24px; font-size: 16px; font-weight: 500; padding-left: 1.500px; display: flex; -webkit-text-stroke: 0.3px currentColor; }
    .h2 { height: 32px; line-height: 32px; font-size: 24px; font-weight: 700; padding-left: 1px; display: flex; }
    .err, .tip { position: relative; }
    .err::after, .tip::after { content: ""; position: absolute; left: 0; right: 0; bottom: -2px; height: 3px; background: #ff97a4; }
    .tip::after { background: #94bdf9; }
    .link { color: #8c8c8c; border-bottom: 1px solid #4c4c4c; }
    .word { color: #8c8c8c; }
    .num { width: 28px; padding-left: 7px; }
    .inner { padding-left: 28px; }
    .code { margin: 7px 0 8px 28px; height: 86px; width: 680px; background: #202020; border-radius: 4px; padding: 2px 0 0 32px; display: flex; align-items: center; font-family: "DejaVu Sans Mono", "Liberation Mono", monospace; font-size: 12.500px; color: #dedede; -webkit-text-stroke: 0.3px currentColor; }
    .punc { color: #999; } .op { color: #e0a33c; } .str { color: #b8dc4c; }
    .s8 { height: 8px; } .s18 { height: 18px; } .s28 { height: 28.500px; } .s40 { height: 40px; }

    /* floating widgets */
    .bubble { position: absolute; left: 1870px; top: 910px; }
    .face { position: absolute; left: 1853px; top: 965px; width: 36px; height: 36px; border-radius: 50%; background: #d6d6d6; color: #151515; }

    /* taskbar */
    .task { height: 46px; flex: none; border-top: 1px solid #454a55; display: flex; align-items: center; color: #fff; font-size: 12px; background: linear-gradient(90deg, #1c232e 0, #182238 330px, #101d48 480px, #101f5c 560px, #121c5e 700px, #11205a 1000px, #12205a 1260px, #1b2240 1380px, #1e2434 1480px, #1d232f 1917px); }
    .weather { display: flex; align-items: center; padding-left: 17px; width: 551px; line-height: 16px; gap: 3px; }
    .stack { display: flex; flex-direction: column; }
    .soft { color: #cfd3da; }
    .find { margin-left: 12px; width: 220px; height: 32px; border-radius: 16px; background: linear-gradient(90deg, #37446f, #323963 45%, #33477a 75%, #2e3f70); border: 1px solid #4a567f; display: flex; align-items: center; padding: 0 9px 0 11px; font-size: 13.500px; color: #d3d8e6; gap: 11px; }
    .find .art { margin-left: auto; }
    .apps { display: flex; margin-left: 2px; }
    .app { width: 44px; height: 45px; position: relative; }
    .app.active::before { content: ""; position: absolute; left: 2px; top: 3px; width: 40px; height: 40px; border-radius: 4px; background: #25305f; border: 1px solid #303c70; }
    .app .ic { position: relative; }
    .app i { position: absolute; bottom: 3px; left: 19px; width: 6px; height: 3px; border-radius: 2px; background: #9aa0b4; }
    .app i.wide { left: 14px; width: 16px; background: #4cc2ff; }
    .clock { margin-left: auto; padding-right: 20px; display: flex; flex-direction: column; align-items: flex-end; line-height: 16px; color: #dcdfe6; }
  `;

  row([ic, label, w, sub]: Row) {
    return html`<div class="row ${sub ? "sub" : ""}"><span class="rowicon center">${I[ic]}</span>${fit(w, label)}</div>`;
  }

  render() {
    const e = (t: string) => html`<span class="err">${t}</span>`;
    const clockIcon = (s: number) => line(s, 18, clockD, 1.4, svg`<circle cx="9" cy="9" r="7.600"></circle>`);
    return html`<div class="screen">
      <div class="tabs">
        <div class="tabsearch center">${line(12, 12, "M2.500 4.300 6 7.800l3.500-3.500", 1.800)}</div>
        ${TABS.map(([ic, label, w, on], i) => html`<div class="tab ${on ? "on" : ""}"><span class="tabicon">${ic}</span><div class="tablabel ${w > 160 ? "fade" : ""}">${fit(w, label)}</div><span class="tabclose">${closeX}</span></div><div class="tabsep center">${i > 1 ? html`<i></i>` : nothing}</div>`)}
        <div class="newtab center">${line(12, 12, "M6 1v10M1 6h10", 1.6)}</div>
        <div class="winbtns">
          <div class="center">${line(12, 12, "M1 6.500h10", 1.1)}</div>
          <div class="center">${line(12, 12, "M1.500 4.500a1 1 0 0 1 1-1h5a1 1 0 0 1 1 1v6a1 1 0 0 1-1 1h-5a1 1 0 0 1-1-1zM3.800 1.300h5.200a2 2 0 0 1 2 2v6", 1.1)}</div>
          <div class="center">${line(12, 12, "M1 1l10 10M11 1 1 11", 1.2)}</div>
        </div>
      </div>
      <div class="strip"><div class="toolbar">
        <div class="nav center">${line(16, 16, "M14 8H2.500M7.500 3l-5 5 5 5", 1.7)}</div>
        <div class="nav center dim">${line(16, 16, "M2 8h11.500M8.500 3l5 5-5 5", 1.7)}</div>
        <div class="nav center">${line(16, 16, "M13.500 9.200A5.600 5.600 0 1 1 12 4l1.500 1.600M13.700 1.800v4h-4", 1.7)}</div>
        <div class="omni">
          <span class="site center">${line(14, 14, "M7.500 4H13M1 10h5.500", 1.5, svg`<circle cx="3" cy="4" r="1.700"></circle><circle cx="10.700" cy="10" r="1.700"></circle>`)}</span>
          ${fit(434, html`<span class="host">notion.so</span>/Local-Query-Scopes-1385f5b5b4668032add8d886d603e209`, "url")}
          <span class="star">${line(18, 18, "M9 2l2 4.800 5.200.4-4 3.400 1.300 5.100L9 12.900l-4.500 2.800 1.300-5.100-4-3.400 5.200-.4z", 1.5)}</span>
        </div>
        <div class="exts">${EXT.map((x) => html`<div class="nav center">${x}</div>`)}</div>
        <i class="vsep extsep"></i>
        <div class="ava center">${icon(20, 20, avatarArt)}</div>
        <div class="kebab center">${icon(20, 20, svg`<g fill="#c8d0de"><circle cx="10" cy="4" r="1.600"></circle><circle cx="10" cy="10" r="1.600"></circle><circle cx="10" cy="16" r="1.600"></circle></g>`)}</div>
      </div></div>
      <div class="marks">
        ${line(16, 16, "M1.800 1.800h4v4h-4zM10.200 1.800h4v4h-4zM1.800 10.200h4v4h-4zM10.200 10.200h4v4h-4z", 1.6)}
        <i class="vsep"></i>
        ${MARKS.map(([ic, t, w, g, cell]) => html`<div class="mark">${ic}<span class="marklabel" style="padding-left:${g}px;width:${cell}px">${fit(w, t)}</span></div>`)}
        <div class="right"><i class="vsep"></i>${folder}<span class="marklabel">${fit(76, "All Bookmarks")}</span></div>
      </div>

      <div class="work">
        <div class="side">
          <div class="owner"><span class="ownerbox center">T</span>${fit(91, "TAHIR Ahme...", "ownername")}<span class="chev">${line(10, 10, "M1 3l4 4 4-4", 1.3)}</span>
            <span class="pen">${line(18, 18, "M10 2.500H5A3 3 0 0 0 2 5.500V13a3 3 0 0 0 3 3h7.500a3 3 0 0 0 3-3V8.500M7.300 10.700l.8-2.500 6.800-6.800M7.300 10.700l2.500-.8 6.800-6.800", 1.6)}</span></div>
          ${MAIN.map((r) => this.row(r))}
          <div class="caption">${fit(38, "Private")}</div>
          ${PAGES.map((r) => this.row(r))}
          <div class="gap23"></div>
          ${TOOLS.map((r) => this.row(r))}
          <div class="gap107"></div>
          ${this.row(["invite", "Invite members", 98.5])}
        </div>
        <div class="main">
          <div class="topbar">
            ${book}<span class="crumb">${fit(160, "Master Laravel & PHP: Fr...")}</span><span class="slash center">/</span>${fit(122, "Local Query Scopes")}
            <span class="edited">${fit(94, "Edited just now")}</span><span class="share">${fit(36, "Share")}</span>
            <span class="act center">${line(20, 20, "M4 2.500h12a2.200 2.200 0 0 1 2.200 2.200v8.600a2.200 2.200 0 0 1-2.200 2.200H9L5.500 18.500v-3H4a2.200 2.200 0 0 1-2.200-2.200V4.700A2.200 2.200 0 0 1 4 2.500zM6 6.300h8M6 9h8M6 11.700h5", 1.4)}</span>
            <span class="act center">${clockIcon(19)}</span>
            <span class="act center">${line(20, 20, "M10 1.800l2.300 5.700 6 .4-4.600 3.900 1.500 6L10 14.500l-5.200 3.300 1.500-6L1.700 7.900l6-.4z", 1.5)}</span>
            <span class="act center">${icon(20, 20, svg`<g fill="currentColor"><circle cx="3.500" cy="10" r="2"></circle><circle cx="10" cy="10" r="2"></circle><circle cx="16.500" cy="10" r="2"></circle></g>`)}</span>
          </div>
          <div class="page">
            <div class="title">${fit(367.5, "Local Query Scopes")}</div>
            <div class="props">
              <div class="prop">${clockIcon(16)}<span class="propname">${fit(50, "Created")}</span>${fit(164.5, "November 8, 2024 7:00 PM", "value")}</div>
              <div class="prop">${line(16, 18, "M6 4h11M6 9h11M6 14h11M1.500 4h1M1.500 9h1M1.500 14h1", 1.5)}<span class="propname">${fit(27, "Tags")}</span>${fit(40, "Empty", "pale")}</div>
              <div class="prop pale">${line(16, 18, "M9 1.500v15M1.500 9h15", 1.5)}<span class="propname">${fit(93, "Add a property")}</span></div>
            </div>
            <div class="rule"></div>
            <div class="commentrow"><span class="mini center">T</span>${fit(109, "Add a comment...")}</div>
            <div class="rule"></div>
            <div class="s18"></div>
            <div class="ln">${fit(684.5, "Alright now, In this section we’ll be learning a very interesting Laravel Eloquent feature called Local")}</div>
            <div class="ln">${fit(102, "Query Scopes.")}</div>
            <div class="s28"></div>
            <div class="h2">${fit(237.5, "What is Query Scopes")}</div>
            <div class="s8"></div>
            <div class="ln">${fit(685.5, html`Query scopes <span class="tip">basically</span> encapsulate some of the query ${e("constrains")} that you might also create using`)}</div>
            <div class="ln">${fit(660.5, html`<span class="link">query </span><span class="err"><span class="word">builders</span> .</span> But instead using the local query scopes. You can enclose some of those query`)}</div>
            <div class="ln">${fit(682, html`${e("constrains")} in a single method and then call those ${e("method")} together with other ${e("constrains")} available`)}</div>
            <div class="ln">${fit(169, "inside the query builder.")}</div>
            <div class="s40"></div>
            <div class="ln">${fit(491.5, html`Before moving ahead let’s do some ${e("query")} in ${e("tinker")} run ${e("tinker")} in our CLI`)}</div>
            <div class="s8"></div>
            <div class="ln"><span class="num">1.</span>${fit(152, "Search a book by title")}</div>
            <div class="code">${fit(439.5, html`<span class="punc">\\</span>App<span class="punc">\\</span>Models<span class="punc">\\</span>Book<span class="op">::</span>where<span class="punc">(</span><span class="str">'title'</span><span class="punc">, </span><span class="str">'LIKE'</span><span class="punc">, </span><span class="str">'%search_input%'</span><span class="punc">);</span>`)}</div>
            <div class="inner"><div class="ln">${fit(581, html`this will match all the books that ${e("has")} the text. ${e("User")} ${e("provide")} in the search_input field.`)}</div></div>
            <div class="s40"></div>
            <div class="ln">${fit(671, "Now we know how to construct a query that is basically searching for a specific text in a field. So")}</div>
          </div>
          <div class="scroll"><span class="up">${icon(8, 8, svg`<path d="M0 6 4 2l4 4z" fill="currentColor"></path>`)}</span><span class="thumb"></span><span class="down">${icon(8, 8, svg`<path d="M0 2l4 4 4-4z" fill="currentColor"></path>`)}</span></div>
        </div>
      </div>

      <div class="task">
        <div class="weather">
          ${icon(30, 30, svg`<path d="M4 16.500h5c6-.5 9-2 10-4h5.500c1 3 0 6.500-2.500 9-4 4-15 5-18-5z" fill="#f59a1b"></path><path d="M2 12.500a3 3 0 0 1 1.500-5 4.500 4.500 0 0 1 7.500-1 3.500 3.500 0 0 1 4 6z" fill="#a9c8f5"></path><path d="M13 24.500a3.200 3.200 0 0 1 1-5 5 5 0 0 1 8.500-.8 3.200 3.200 0 0 1 3.500 5.800z" fill="#a4bff5"></path><circle cx="21" cy="7" r="8" fill="#ff99a4"></circle><text x="21.500" y="11" text-anchor="middle" font-family="Open Sans,sans-serif" font-size="11" fill="#111">1</text>`, "over")}
          <div class="stack">${fit(26, "22°C")}${fit(70, "Partly cloudy", "soft")}</div>
        </div>
        ${icon(24, 24, svg`<defs><linearGradient id="wn" x1="0" y1="0" x2="1" y2="1"><stop offset="0" stop-color="#7fdcff"></stop><stop offset="1" stop-color="#0a95f5"></stop></linearGradient></defs><path d="M0 .5h11.300v11.300H0zM12.200.500h11.300v11.300H12.200zM0 12.700h11.300V24H0zM12.200 12.700h11.300V24H12.200z" fill="url(#wn)"></path>`)}
        <div class="find">
          ${line(16, 16, "M10.500 10.800 15 15.300", 1.8, svg`<circle cx="6.800" cy="6.800" r="5.300"></circle>`)}${fit(42, "Search")}
          <svg class="ic art" width="40" height="26" viewBox="0 0 40 26">
            <path d="M2 12C2 4 8 1 13 2c5 0 7 4 7 9l-8 3-10-1z" fill="#4a7fe0"></path><path d="M4 6c4-5 10-5 14 0" fill="none" stroke="#86b0ff" stroke-width="1.500"></path>
            <path d="M1.500 13h9M2 17h8M4 21h8M5 13v7M9 13v9" stroke="#8e99ae" stroke-width="1.200"></path><path d="M10 13l9-1-3 9-4 3z" fill="#4c5a80"></path>
            <path d="M12 21 30 7l4 4-17 12c-3 2-7 0-5-2z" fill="#eeb070"></path><path d="M31 9 39 2.500" stroke="#e0344a" stroke-width="2.400"></path>
            <circle cx="33.500" cy="18.500" r="5" fill="#ee3349"></circle><path d="M30 15.500 37 21.500" stroke="#fff" stroke-width="2"></path>
          </svg>
        </div>
        <div class="apps">${APPS.map((a) => html`<div class="app center ${a.active ? "active" : ""}">${a.art}${a.mark ? html`<i class=${a.mark}></i>` : nothing}</div>`)}</div>
        <div class="clock">${fit(30, "20:28")}${fit(63, "22-11-2024")}</div>
      </div>

      <svg class="bubble" width="36" height="34" viewBox="0 0 36 34">
        <path d="M0 32V17A15 15 0 0 1 15 2a15 15 0 0 1 15 15 15 15 0 0 1-15 15z" fill="#f6f4fa"></path>
        <path d="M4 28V17a11 11 0 1 1 11 11z" fill="#d7143a"></path>
        <text x="14.500" y="22.200" text-anchor="middle" font-family="Open Sans,sans-serif" font-weight="700" font-size="13.500" fill="#fff">17</text>
        <circle cx="24" cy="8" r="6.500" fill="#5b50d6" stroke="#fff" stroke-width="1.200"></circle><path d="M24 4.500v7M20.500 8h7" stroke="#fff" stroke-width="1.500"></path>
      </svg>
      <div class="face center">${icon(22, 18, facePaths)}</div>
    </div>`;
  }
}
